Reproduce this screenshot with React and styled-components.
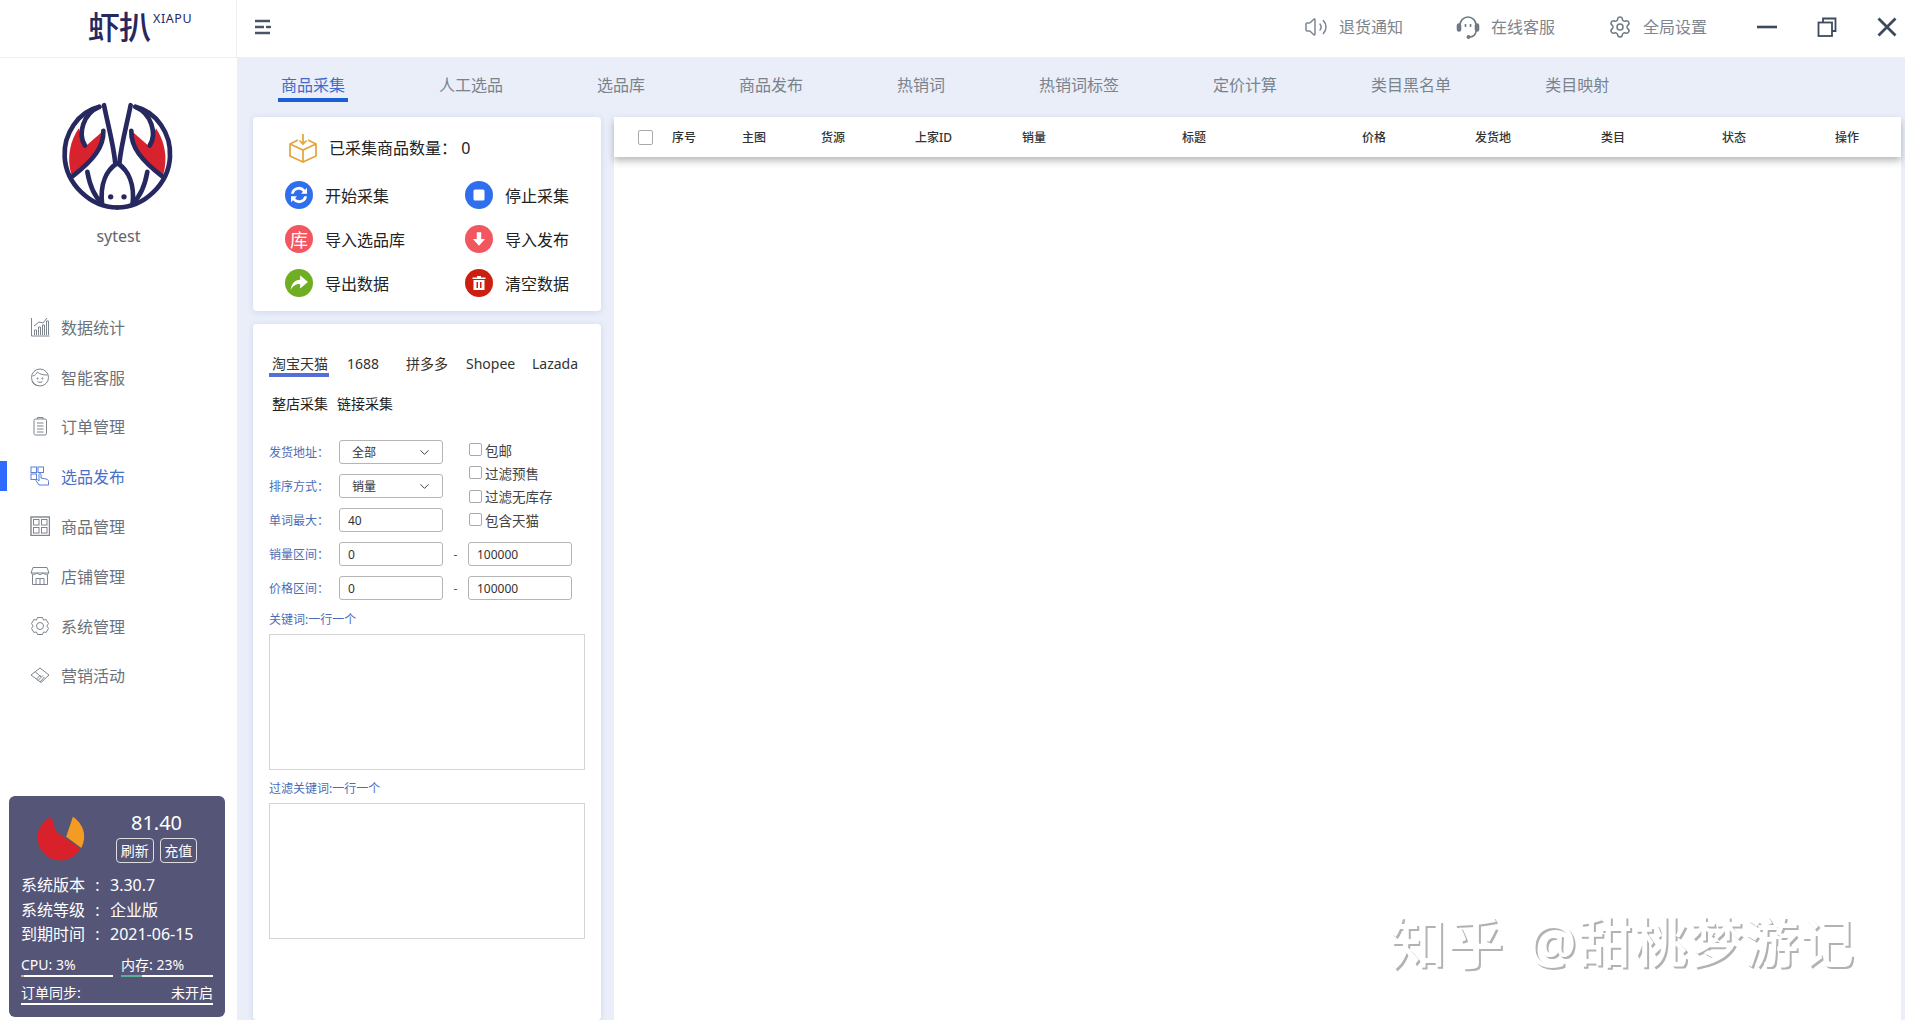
import React from "react";
import styled, { createGlobalStyle } from "styled-components";
import { Volume2, Settings, ChevronDown } from "lucide-react";

const GlobalStyle = createGlobalStyle`
  html, body {
    margin: 0;
    height: 100%;
    overflow: hidden;
    background: #fff;
  }
  * { box-sizing: border-box; }
  body {
    font-family: "Noto Sans", "Noto Sans CJK SC", sans-serif;
  }
`;

const Shell = styled.div`
  position: relative;
  display: flex;
  flex-direction: column;
  height: 100vh;
`;

/* top bar */
const TopBar = styled.header`
  display: flex;
  align-items: center;
  height: 58px;
  flex: none;
  border-bottom: 1px solid #eeeeee;
  background: #fff;
`;

const LogoCell = styled.div`
  width: 237px;
  height: 100%;
  flex: none;
  border-right: 1px solid #eeeeee;
  display: flex;
  align-items: flex-start;
  padding: 8px 0 0 88px;
  color: #26285f;
`;

const LogoName = styled.span`
  font-size: 32px;
  line-height: 38px;
  font-weight: 500;
  letter-spacing: -1px;
`;

const LogoLatin = styled.span`
  font-size: 12.5px;
  line-height: 14px;
  margin: 4px 0 0 3px;
  letter-spacing: 0.6px;
`;

const Toggle = styled.svg`
  width: 18px;
  height: 18px;
  margin: 0 0 3px 17px;
  stroke: #4a5468;
  stroke-width: 2.4;
  fill: none;
`;

const TopActions = styled.div`
  margin: 0 50px 3px auto;
  display: flex;
  align-items: center;
  gap: 53px;
`;

const TopAction = styled.div`
  display: flex;
  align-items: center;
  gap: 11px;
  font-size: 16px;
  line-height: 22px;
  color: #7d858f;
`;

const WindowButtons = styled.div`
  display: flex;
  align-items: center;
  gap: 40px;
  margin: 0 8px 3px 0;
`;

const WindowSvg = styled.svg`
  width: 20px;
  height: 20px;
  fill: none;
  stroke: #3d4a5e;
  stroke-width: 2.2;
`;

/* sidebar */
const Body = styled.div`
  display: flex;
  flex: 1;
  min-height: 0;
`;

const Sidebar = styled.aside`
  width: 237px;
  flex: none;
  display: flex;
  flex-direction: column;
  align-items: stretch;
  background: #fff;
  padding-top: 42px;
`;

const Avatar = styled.svg`
  display: block;
  width: 115px;
  height: 112px;
  margin: 0 0 0 60px;
`;

const UserName = styled.div`
  margin-top: 12px;
  text-align: center;
  font-size: 16px;
  line-height: 24px;
  color: #666666;
`;

const Nav = styled.nav`
  margin-top: 54px;
  display: flex;
  flex-direction: column;
`;

const NavItem = styled.div`
  position: relative;
  display: flex;
  align-items: center;
  gap: 11px;
  height: 49.8px;
  padding-left: 30px;
  font-size: 16px;
  color: ${(p) => (p.$active ? "#4a70c8" : "#6b727b")};
  &::before {
    content: "";
    display: ${(p) => (p.$active ? "block" : "none")};
    position: absolute;
    left: 0;
    top: 10px;
    width: 7px;
    height: 30px;
    background: #2f6bff;
  }
`;

const NavSvg = styled.svg`
  width: 20px;
  height: 20px;
  flex: none;
  fill: none;
  stroke: ${(p) => (p.$active ? "#5a80d8" : "#7e858d")};
  stroke-width: 1;
`;

const StatusPanel = styled.div`
  margin: auto 12px 3px 9px;
  height: 221px;
  padding: 14px 12px 0;
  border-radius: 6px;
  background: #555577;
  color: #fff;
`;

const StatusTop = styled.div`
  display: flex;
  align-items: center;
`;

const PieChart = styled.svg`
  width: 52px;
  height: 47px;
  margin: 3px 0 0 15px;
`;

const Balance = styled.div`
  margin-left: 28px;
  width: 81px;
  text-align: center;
`;

const BalanceValue = styled.div`
  font-size: 20px;
  line-height: 26px;
`;

const BalanceButtons = styled.div`
  display: flex;
  gap: 6px;
  margin-top: 2px;
`;

const SmallButton = styled.div`
  width: 38px;
  height: 25px;
  border: 1px solid #dddddd;
  border-radius: 4px;
  font-size: 14px;
  line-height: 23px;
  text-align: center;
`;

const InfoRows = styled.div`
  margin-top: 10px;
`;

const InfoRow = styled.div`
  display: grid;
  grid-template-columns: 64px 25px 1fr;
  font-size: 16px;
  line-height: 24.5px;
`;

const InfoColon = styled.span`
  text-align: center;
`;

const Meters = styled.div`
  display: grid;
  grid-template-columns: 92px 92px;
  gap: 8px;
  margin-top: 8px;
`;

const MeterText = styled.div`
  font-size: 14px;
  line-height: 20px;
`;

const MeterTrack = styled.div`
  height: 2px;
  background: #ffffff;
`;

const MeterFill = styled.div`
  height: 100%;
  background: ${(p) => p.$color};
`;

const SyncRow = styled.div`
  display: flex;
  justify-content: space-between;
  margin-top: 6px;
  border-bottom: 2px solid #fff;
  font-size: 14px;
  line-height: 20px;
`;

/* main area */
const Main = styled.main`
  flex: 1;
  min-width: 0;
  display: flex;
  flex-direction: column;
  background: #e9eef9;
`;

const TabBar = styled.div`
  display: flex;
  gap: 94px;
  height: 59px;
  flex: none;
  padding: 16px 0 0 44px;
`;

const Tab = styled.div`
  height: 28px;
  font-size: 16px;
  line-height: 22px;
  margin: 0 -3px;
  padding: 0 3px;
  color: ${(p) => (p.$active ? "#3f6cc9" : "#7a828c")};
  border-bottom: 4px solid ${(p) => (p.$active ? "#1a5fd6" : "transparent")};
`;

const Content = styled.div`
  flex: 1;
  min-height: 0;
  display: flex;
  gap: 13px;
  padding: 0 4px 0 16px;
`;

const LeftColumn = styled.div`
  width: 348px;
  flex: none;
  display: flex;
  flex-direction: column;
  gap: 13px;
`;

const Card = styled.section`
  background: #fff;
  border-radius: 4px;
  box-shadow: 0 1px 6px rgba(90, 110, 160, 0.18);
`;

const ActionCard = styled(Card)`
  height: 194px;
  padding: 16px 0 0 32px;
  color: #222222;
  font-size: 16px;
`;

const CollectCount = styled.div`
  display: flex;
  align-items: center;
  gap: 11px;
  height: 30px;
  padding-left: 3px;
  line-height: 30px;
`;

const ActionGrid = styled.div`
  display: grid;
  grid-template-columns: 180px 1fr;
  grid-auto-rows: 44px;
  margin-top: 10px;
`;

const Action = styled.div`
  display: flex;
  align-items: center;
  gap: 12px;
`;

const ActionIcon = styled.div`
  width: 28px;
  height: 28px;
  flex: none;
  display: flex;
  align-items: center;
  justify-content: center;
  border-radius: 50%;
  background: ${(p) => p.$color};
  color: #fff;
  font-size: 18px;
`;

const ActionSvg = styled.svg`
  width: ${(p) => p.$size || 18}px;
  height: ${(p) => p.$size || 18}px;
  fill: #fff;
`;

const FilterCard = styled(Card)`
  flex: 1;
  padding: 30px 0 0 16px;
`;

const SourceTabs = styled.div`
  display: flex;
  color: #333;
  font-size: 14px;
  line-height: 20px;
`;

const SourceTab = styled.div`
  width: ${(p) => p.$width}px;
  height: 23px;
  flex: none;
  margin-right: ${(p) => (p.$active ? 18 : 0)}px;
  padding-left: ${(p) => (p.$active ? 3 : 0)}px;
  border-bottom: 4px solid ${(p) => (p.$active ? "#5470d8" : "transparent")};
`;

const ModeTabs = styled.div`
  display: flex;
  gap: 9px;
  margin-top: 17px;
  padding-left: 3px;
  color: #222;
  font-size: 14px;
  line-height: 20px;
`;

const FormTop = styled.div`
  display: flex;
  margin-top: 26px;
`;

const FormRows = styled.div`
  display: flex;
  flex-direction: column;
  gap: 10px;
`;

const RangeRows = styled(FormRows)`
  margin-top: 10px;
`;

const FormRow = styled.div`
  display: flex;
  align-items: center;
  height: 24px;
`;

const FieldLabel = styled.label`
  width: 70px;
  flex: none;
  font-size: 12px;
  color: #4b6cb7;
`;

const TextField = styled.input`
  width: 104px;
  height: 24px;
  padding: 0 8px;
  border: 1px solid #b5b5b5;
  border-radius: 3px;
  outline: none;
  font: 12px "Noto Sans", sans-serif;
  color: #333;
`;

const SelectBox = styled.div`
  display: flex;
  align-items: center;
  justify-content: space-between;
  width: 104px;
  height: 24px;
  padding: 0 10px 0 12px;
  border: 1px solid #b5b5b5;
  border-radius: 3px;
  font-size: 12px;
  color: #333;
`;

const Dash = styled.span`
  width: 25px;
  text-align: center;
  font-size: 12px;
  color: #555;
`;

const CheckColumn = styled.div`
  display: flex;
  flex-direction: column;
  height: 92px;
  margin: -2px 0 0 26px;
`;

const CheckRow = styled.label`
  display: flex;
  align-items: center;
  gap: 3px;
  height: 23.3px;
  flex: none;
  font-size: 13.5px;
  color: #444;
`;

const CheckBox = styled.input.attrs({ type: "checkbox" })`
  appearance: none;
  width: ${(p) => p.$size || 13}px;
  height: ${(p) => p.$size || 13}px;
  flex: none;
  margin: 0;
  border: 1px solid #aaaaaa;
  border-radius: 2px;
  background: #fff;
`;

const AreaLabel = styled.div`
  margin-top: ${(p) => p.$top}px;
  font-size: 12px;
  line-height: 16px;
  color: #4b6cb7;
`;

const KeywordArea = styled.textarea`
  display: block;
  width: 316px;
  height: 136px;
  margin-top: 6px;
  border: 1px solid #d4d4d4;
  resize: none;
  outline: none;
`;

const TableCard = styled.section`
  flex: 1;
  min-width: 0;
  background: #fff;
`;

const TableHead = styled.div`
  display: grid;
  grid-template-columns: 34px 70px 79px 94px 107px 160px 180px 113px 126px 121px 113px 1fr;
  align-items: center;
  height: 40px;
  padding-left: 24px;
  background: #fff;
  box-shadow: 0 4px 7px rgba(60, 70, 70, 0.36);
  font-size: 12px;
  font-weight: 500;
  color: #333;
`;

const Watermark = styled.div`
  position: absolute;
  left: 1390px;
  top: 906px;
  display: flex;
  white-space: nowrap;
  font-size: 54px;
  line-height: 72px;
  font-weight: 500;
  letter-spacing: 1.5px;
  color: #fff;
  text-shadow: 2px 2px 0 #b2b2b2;
`;

const WatermarkBrand = styled.span`
  font-size: 56px;
  margin-right: 23px;
`;

const ChartIcon = () => (
  <>
    <path d="M1.5 1v18h18" />
    <path d="M4.5 18v-5h2v5M8.5 18v-8h2v8M12.5 18V8h2v10M16.5 18V4h2v14" />
    <path d="M4 9l5-4 4 1 4-5" />
  </>
);
const FaceIcon = () => (
  <>
    <circle cx="10" cy="10.5" r="8.5" />
    <path d="M2.5 9c3 0 4-3 5-4 2 2.500 6 3 10 3" />
    <circle cx="7.500" cy="11.500" r=".6" />
    <circle cx="12.500" cy="11.500" r=".6" />
    <path d="M7.500 14.500c1.500 1.200 3.500 1.200 5 0M2 14c1 3 3 4 5 4.500" />
  </>
);
const ClipboardIcon = () => (
  <>
    <rect x="4" y="3" width="12.500" height="16" rx="1.500" />
    <path d="M7.500 3V1.500h5.500V3M7 7h6.500M7 10h6.500M7 13h6.500M7 16h6.500" />
  </>
);
const HandIcon = () => (
  <>
    <rect x="1" y="1" width="5.500" height="5.500" />
    <rect x="8" y="1" width="5.500" height="5.500" />
    <rect x="1" y="8" width="5.500" height="5.500" />
    <path d="M9 19l-3-4.500c-.5-1 .5-1.500 1.500-.8L9 15V8.500c0-1.500 2-1.500 2 0V12l5 1c1.500.3 2.500 1 2.500 2.500V19z" />
  </>
);
const GridIcon = () => (
  <>
    <rect x="1" y="1" width="18.500" height="18.500" strokeWidth="1.400" />
    <rect x="3.500" y="3.500" width="5.500" height="5.500" />
    <rect x="11.500" y="3.500" width="5.500" height="5.500" />
    <rect x="3.500" y="11.500" width="5.500" height="5.500" />
    <rect x="11.500" y="11.500" width="5.500" height="5.500" />
  </>
);
const StoreIcon = () => (
  <>
    <path d="M3 1.500h14l2 5.500H1zM1 7c2.500 2 3.500 2 6 0 2.500 2 3.500 2 6 0 2.500 2 3.500 2 6 0" />
    <path d="M2.500 8.500V18.500h15V8.500M6 18.500v-6h8v6M10 12.500v6" />
  </>
);
const GearIcon = () => (
  <>
    <path d="M7.500 1.500h5l1 2.500 2.700-.4 2.300 4-1.700 2.400 1.700 2.400-2.300 4-2.700-.4-1 2.500h-5l-1-2.500-2.700.4-2.300-4 1.700-2.400-1.700-2.400 2.300-4 2.700.4z" />
    <circle cx="10" cy="10" r="3.500" />
  </>
);
const ShakeIcon = () => (
  <>
    <path d="M10 3l9 7-8 7.500L1 10z" />
    <path d="M5 6.500l6 5.500M8 15.500l5-5M6.500 14l4-4M10 17l4.500-5" />
  </>
);

const navItems = [
  { label: "数据统计", Icon: ChartIcon },
  { label: "智能客服", Icon: FaceIcon },
  { label: "订单管理", Icon: ClipboardIcon },
  { label: "选品发布", Icon: HandIcon, active: true },
  { label: "商品管理", Icon: GridIcon },
  { label: "店铺管理", Icon: StoreIcon },
  { label: "系统管理", Icon: GearIcon },
  { label: "营销活动", Icon: ShakeIcon },
];

const tabs = ["商品采集", "人工选品", "选品库", "商品发布", "热销词", "热销词标签", "定价计算", "类目黑名单", "类目映射"];
const columns = ["序号", "主图", "货源", "上家ID", "销量", "标题", "价格", "发货地", "类目", "状态", "操作"];
const sources = [
  { label: "淘宝天猫", width: 60, active: true },
  { label: "1688", width: 59 },
  { label: "拼多多", width: 60 },
  { label: "Shopee", width: 66 },
  { label: "Lazada", width: 60 },
];
const systemInfo = [
  { label: "系统版本", value: "3.30.7" },
  { label: "系统等级", value: "企业版" },
  { label: "到期时间", value: "2021-06-15" },
];

const LogoHalf = ({ mirrored }) => (
  <g
    fill="none"
    stroke="#26285f"
    strokeWidth="14"
    strokeLinecap="round"
    transform={mirrored ? "translate(704 0) scale(-1 1)" : undefined}
  >
    <path
      d="M236 384 C212 420 198 470 215 526 L290 462 C305 445 310 420 310 392 L255 440 Z"
      fill="#d8232f"
      stroke="none"
    />
    <path d="M298 320 C235 335 190 400 194 470 C198 550 270 622 352 622" />
    <path d="M298 320 C250 340 232 400 255 436" />
    <path d="M310 392 C312 440 280 480 218 528" />
    <path d="M312 315 C325 380 340 430 346 490" />
    <path d="M262 515 C270 560 285 590 305 608" />
    <path d="M350 490 C320 510 300 550 306 610" />
  </g>
);

const Logo = () => (
  <Avatar viewBox="180 300 345 335">
    <LogoHalf />
    <LogoHalf mirrored />
    <circle cx="332" cy="590" r="8" fill="#26285f" />
    <circle cx="372" cy="590" r="8" fill="#26285f" />
  </Avatar>
);

export default function App() {
  return (
    <Shell>
      <GlobalStyle />
      <TopBar>
        <LogoCell>
          <LogoName>虾扒</LogoName>
          <LogoLatin>XIAPU</LogoLatin>
        </LogoCell>
        <Toggle viewBox="0 0 18 18">
          <path d="M1 3h15M1 9h9M1 15h15" />
          <path d="M13 9h3" strokeLinecap="round" />
        </Toggle>
        <TopActions>
          <TopAction>
            <Volume2 size={24} strokeWidth={1.5} color="#7d8794" />
            退货通知
          </TopAction>
          <TopAction>
            <svg width="24" height="25" viewBox="0 0 24 25" fill="none" stroke="#6f7984" strokeWidth="1.600">
              <path d="M4 14V10a8 8 0 0 1 16 0v4" />
              <rect x="1.500" y="9" width="3" height="7" rx="1.500" fill="#6f7984" />
              <rect x="19.500" y="9" width="3" height="7" rx="1.500" fill="#6f7984" />
              <path d="M20 16c0 3.500-3 6-6.500 6" />
              <circle cx="12.500" cy="22" r="1.200" fill="#6f7984" />
              <path d="M9.500 9v3M14.500 9v3" />
            </svg>
            在线客服
          </TopAction>
          <TopAction>
            <Settings size={24} strokeWidth={1.5} color="#6f7984" />
            全局设置
          </TopAction>
        </TopActions>
        <WindowButtons>
          <WindowSvg viewBox="0 0 20 20">
            <path d="M0 10h20" strokeWidth="2.600" />
          </WindowSvg>
          <WindowSvg viewBox="0 0 20 20">
            <path d="M6 5V1.500h12.500V14H15" strokeWidth="1.800" />
            <rect x="1.500" y="5.500" width="13.500" height="13.500" strokeWidth="1.800" />
          </WindowSvg>
          <WindowSvg viewBox="0 0 20 20">
            <path d="M1.500 1.500l17 17M18.500 1.500l-17 17" strokeWidth="2.800" />
          </WindowSvg>
        </WindowButtons>
      </TopBar>
      <Body>
        <Sidebar>
          <Logo />
          <UserName>sytest</UserName>
          <Nav>
            {navItems.map(({ label, Icon, active }) => (
              <NavItem key={label} $active={active}>
                <NavSvg viewBox="0 0 20 20" $active={active}>
                  <Icon />
                </NavSvg>
                {label}
              </NavItem>
            ))}
          </Nav>
          <StatusPanel>
            <StatusTop>
              <PieChart viewBox="105 100 155 140">
                <path d="M150 105 A68 68 0 1 0 237 200 L165 150 Z" fill="#d8212a" />
                <path d="M215 105 A70 70 0 0 1 240 198 L195 165 Z" fill="#f59a23" />
              </PieChart>
              <Balance>
                <BalanceValue>81.40</BalanceValue>
                <BalanceButtons>
                  <SmallButton>刷新</SmallButton>
                  <SmallButton>充值</SmallButton>
                </BalanceButtons>
              </Balance>
            </StatusTop>
            <InfoRows>
              {systemInfo.map((row) => (
                <InfoRow key={row.label}>
                  <span>{row.label}</span>
                  <InfoColon>:</InfoColon>
                  <span>{row.value}</span>
                </InfoRow>
              ))}
            </InfoRows>
            <Meters>
              <div>
                <MeterText>CPU: 3%</MeterText>
                <MeterTrack>
                  <MeterFill $color="#d9a0a8" style={{ width: "3%" }} />
                </MeterTrack>
              </div>
              <div>
                <MeterText>内存: 23%</MeterText>
                <MeterTrack>
                  <MeterFill $color="#5fae9a" style={{ width: "23%" }} />
                </MeterTrack>
              </div>
            </Meters>
            <SyncRow>
              <span>订单同步:</span>
              <span>未开启</span>
            </SyncRow>
          </StatusPanel>
        </Sidebar>
        <Main>
          <TabBar>
            {tabs.map((tab, i) => (
              <Tab key={tab} $active={i === 0}>
                {tab}
              </Tab>
            ))}
          </TabBar>
          <Content>
            <LeftColumn>
              <ActionCard>
                <CollectCount>
                  <svg width="30" height="30" viewBox="0 0 30 30" fill="none" stroke="#e5a43a" strokeWidth="1.700">
                    <path d="M10 7L2 11v12l13 6 13-6V11l-8-4" />
                    <path d="M2 11l13 6 13-6M15 17v12M15 1v10M11.500 7.500L15 11l3.500-3.500" />
                  </svg>
                  已采集商品数量： 0
                </CollectCount>
                <ActionGrid>
                  <Action>
                    <ActionIcon $color="#2f6fed">
                      <ActionSvg viewBox="0 0 18 18" $size={24}>
                        <path d="M3 8a6 6 0 0 1 10.500-3L15 3.500V8h-4.500l1.500-1.500A4 4 0 0 0 5 8zM15 10a6 6 0 0 1-10.500 3L3 14.500V10h4.500L6 11.500A4 4 0 0 0 13 10z" />
                      </ActionSvg>
                    </ActionIcon>
                    开始采集
                  </Action>
                  <Action>
                    <ActionIcon $color="#2f6fed">
                      <ActionSvg viewBox="0 0 18 18">
                        <rect x="3.500" y="3.500" width="11" height="11" rx="1.500" />
                      </ActionSvg>
                    </ActionIcon>
                    停止采集
                  </Action>
                  <Action>
                    <ActionIcon $color="#f2565f">库</ActionIcon>
                    导入选品库
                  </Action>
                  <Action>
                    <ActionIcon $color="#f2565f">
                      <ActionSvg viewBox="0 0 18 18" $size={20}>
                        <path d="M7 3h4v6h3.500L9 15 3.500 9H7z" />
                      </ActionSvg>
                    </ActionIcon>
                    导入发布
                  </Action>
                  <Action>
                    <ActionIcon $color="#6fae22">
                      <ActionSvg viewBox="0 0 18 18" $size={20}>
                        <path d="M10 2l7 6-7 6v-4C6 10 3.500 11.500 1.500 15.500 2 10 5 6 10 6z" />
                      </ActionSvg>
                    </ActionIcon>
                    导出数据
                  </Action>
                  <Action>
                    <ActionIcon $color="#cc1f0f">
                      <ActionSvg viewBox="0 0 18 18">
                        <path d="M7 2h4v1.500h4.500V5h-13V3.500H7zM3.500 6h11v10h-11zM6.500 8v6H8V8zM10 8v6h1.500V8z" fillRule="evenodd" />
                      </ActionSvg>
                    </ActionIcon>
                    清空数据
                  </Action>
                </ActionGrid>
              </ActionCard>
              <FilterCard>
                <SourceTabs>
                  {sources.map((s) => (
                    <SourceTab key={s.label} $width={s.width} $active={s.active}>
                      {s.label}
                    </SourceTab>
                  ))}
                </SourceTabs>
                <ModeTabs>
                  <span>整店采集</span>
                  <span>链接采集</span>
                </ModeTabs>
                <FormTop>
                  <FormRows>
                    <FormRow>
                      <FieldLabel>发货地址：</FieldLabel>
                      <SelectBox>
                        全部
                        <ChevronDown size={15} strokeWidth={1.500} />
                      </SelectBox>
                    </FormRow>
                    <FormRow>
                      <FieldLabel>排序方式：</FieldLabel>
                      <SelectBox>
                        销量
                        <ChevronDown size={15} strokeWidth={1.500} />
                      </SelectBox>
                    </FormRow>
                    <FormRow>
                      <FieldLabel>单词最大：</FieldLabel>
                      <TextField defaultValue="40" />
                    </FormRow>
                  </FormRows>
                  <CheckColumn>
                    {["包邮", "过滤预售", "过滤无库存", "包含天猫"].map((c) => (
                      <CheckRow key={c}>
                        <CheckBox />
                        {c}
                      </CheckRow>
                    ))}
                  </CheckColumn>
                </FormTop>
                <RangeRows>
                  <FormRow>
                    <FieldLabel>销量区间：</FieldLabel>
                    <TextField defaultValue="0" />
                    <Dash>-</Dash>
                    <TextField defaultValue="100000" />
                  </FormRow>
                  <FormRow>
                    <FieldLabel>价格区间：</FieldLabel>
                    <TextField defaultValue="0" />
                    <Dash>-</Dash>
                    <TextField defaultValue="100000" />
                  </FormRow>
                </RangeRows>
                <AreaLabel $top={12}>关键词:一行一个</AreaLabel>
                <KeywordArea />
                <AreaLabel $top={11}>过滤关键词:一行一个</AreaLabel>
                <KeywordArea />
              </FilterCard>
            </LeftColumn>
            <TableCard>
              <TableHead>
                <CheckBox $size={15} />
                {columns.map((c) => (
                  <span key={c}>{c}</span>
                ))}
              </TableHead>
            </TableCard>
          </Content>
        </Main>
      </Body>
      <Watermark>
        <WatermarkBrand>知乎</WatermarkBrand>
        <span>@甜桃梦游记</span>
      </Watermark>
    </Shell>
  );
}
